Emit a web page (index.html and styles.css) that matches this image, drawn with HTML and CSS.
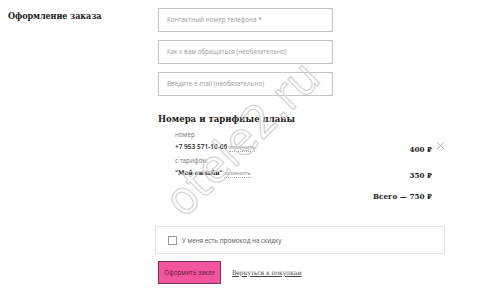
FILE: index.html
```html
<!DOCTYPE html>
<html lang="ru">
<head>
<meta charset="utf-8">
<link rel="stylesheet" href="styles.css">
</head>
<body>
<div class="page">
  <div class="side">
    <h1 class="title">Оформление заказа</h1>
  </div>
  <div class="main">
    <div class="fields">
      <div class="field">Контактный номер телефона *</div>
      <div class="field">Как к вам обращаться (необязательно)</div>
      <div class="field">Введите e-mail (необязательно)</div>
    </div>
    <div class="order">
      <h2 class="order-title">Номера и тарифные планы</h2>
      <div class="lines">
        <div class="label">номер</div>
        <div></div><div></div>
        <div class="value"><span class="number">+7 953 571-10-66</span> <span class="change">изменить</span></div>
        <div class="price">400 ₽</div>
        <div class="close">
          <svg width="9" height="9" viewBox="0 0 9 9"><path d="M1 1L8 8M8 1L1 8" stroke="#9a9a9a" stroke-width="0.8" fill="none"/></svg>
        </div>
        <div class="label">с тарифом</div>
        <div></div><div></div>
        <div class="value"><span class="tariff">"Мой онлайн"</span> <span class="change">изменить</span></div>
        <div class="price">350 ₽</div>
        <div></div>
      </div>
      <div class="total">Всего — 750 ₽</div>
    </div>
    <label class="promo">
      <span class="check"></span>
      <span class="promo-text">У меня есть промокод на скидку</span>
    </label>
    <div class="actions">
      <button class="submit">Оформить заказ</button>
      <a class="back" href="#">Вернуться к покупкам</a>
    </div>
  </div>
  <svg class="watermark" width="480" height="296" viewBox="0 0 480 296">
    <text x="184" y="219" transform="rotate(-45 184 219)" textLength="196" lengthAdjust="spacingAndGlyphs">otele2.ru</text>
  </svg>
</div>
</body>
</html>
```
FILE: styles.css
```css
html, body {
  margin: 0;
  padding: 0;
  background: #ffffff;
}
.page {
  position: relative;
  width: 480px;
  height: 296px;
  overflow: hidden;
  display: flex;
  font-family: "Open Sans", "Liberation Sans", sans-serif;
  color: #555;
}
.side {
  width: 150px;
  padding: 11px 0 0 8px;
  box-sizing: border-box;
}
.title {
  margin: 0;
  font-family: "DejaVu Serif", serif;
  font-stretch: condensed;
  font-weight: bold;
  font-size: 9px;
  color: #222;
  letter-spacing: -0.1px;
}
.main {
  width: 295px;
  padding-top: 8px;
  padding-left: 8px;
  box-sizing: border-box;
}
.fields {
  display: flex;
  flex-direction: column;
  gap: 8px;
}
.field {
  width: 175px;
  height: 24px;
  box-sizing: border-box;
  border: 1px solid #c4c4c4;
  padding-left: 8px;
  font-size: 6.3px;
  line-height: 22px;
  color: #9a9a9a;
}
.order {
  margin-top: 16px;
  width: 287px;
}
.order-title {
  margin: 0 0 3px 0;
  font-family: "DejaVu Serif", serif;
  font-stretch: condensed;
  font-weight: bold;
  font-size: 9.5px;
  line-height: 14px;
  color: #222;
}
.lines {
  display: grid;
  grid-template-columns: 1fr auto 13px;
  padding-left: 17px;
}
.label, .value {
  font-size: 6.3px;
  line-height: 12px;
  color: #777;
}
.value {
  color: #222;
}
.number {
  font-weight: 600;
  font-size: 6.5px;
}
.tariff {
  font-family: "DejaVu Serif", serif;
  font-stretch: condensed;
  font-weight: bold;
  font-size: 6.5px;
}
.change {
  font-size: 5.6px;
  color: #8a8a8a;
  border-bottom: 1px dotted #aaa;
}
.price, .total {
  font-family: "DejaVu Serif", serif;
  font-stretch: condensed;
  font-weight: bold;
  font-size: 8px;
  line-height: 12px;
  color: #222;
  text-align: right;
}
.price {
  padding-top: 2px;
}
.close {
  display: flex;
  justify-content: flex-end;
  align-items: flex-start;
}
.total {
  margin-top: 9px;
  padding-right: 13px;
}
.promo {
  display: flex;
  align-items: center;
  gap: 5px;
  margin: 24px 0 0 -3px;
  width: 290px;
  height: 28px;
  box-sizing: border-box;
  border: 1px solid #e6e6e6;
  padding-left: 12px;
}
.check {
  width: 7px;
  height: 7px;
  border: 1px solid #9a9a9a;
  background: #fff;
}
.promo-text {
  font-size: 6.3px;
  color: #555;
}
.actions {
  display: flex;
  align-items: center;
  gap: 11px;
  margin-top: 7px;
}
.submit {
  width: 63px;
  height: 23px;
  background: #f2559e;
  border: 1px solid #7c3458;
  font-family: "Open Sans", "Liberation Sans", sans-serif;
  font-size: 6.3px;
  color: #5a1a3a;
  padding: 0;
}
.back {
  font-family: "DejaVu Serif", serif;
  font-stretch: condensed;
  font-size: 6.5px;
  color: #444;
  text-decoration: underline;
}
.watermark {
  position: absolute;
  left: 0;
  top: 0;
  pointer-events: none;
}
.watermark text {
  font-family: "DejaVu Sans", sans-serif;
  font-size: 46px;
  fill: none;
  stroke: #d0d0d0;
  stroke-width: 1.1;
}
```
